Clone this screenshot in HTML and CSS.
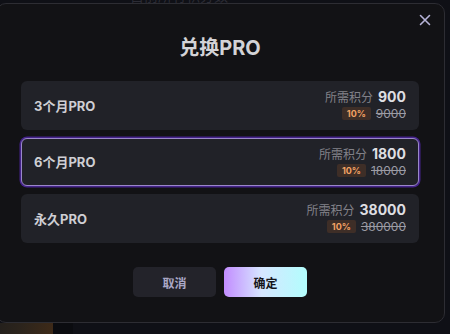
FILE: index.html
```html
<!DOCTYPE html>
<html lang="zh">
<head>
<meta charset="utf-8">
<link rel="stylesheet" href="styles.css">
</head>
<body>
<div class="page">
  <div class="page-top"><span class="page-top-text">目前所有积分数</span></div>
  <div class="page-fill"></div>
  <div class="page-bottom">
    <div class="thumb"></div>
    <div class="thumb-dark"></div>
  </div>
</div>

<div class="modal">
  <button class="close" aria-label="关闭">
    <svg width="12" height="12" viewBox="0 0 12 12"><path d="M1.5 1.5 L10.5 10.5 M10.5 1.5 L1.5 10.5" stroke="#b6b3d8" stroke-width="1.6" stroke-linecap="round" fill="none"/></svg>
  </button>
  <h1 class="title">兑换PRO</h1>
  <div class="plans">
    <div class="plan">
      <div class="plan-name">3个月PRO</div>
      <div class="plan-price">
        <div class="price-row"><span class="price-label">所需积分</span><span class="price-value">900</span></div>
        <div class="price-row"><span class="badge">10%</span><span class="old">9000</span></div>
      </div>
    </div>
    <div class="plan selected">
      <div class="plan-name">6个月PRO</div>
      <div class="plan-price">
        <div class="price-row"><span class="price-label">所需积分</span><span class="price-value">1800</span></div>
        <div class="price-row"><span class="badge">10%</span><span class="old">18000</span></div>
      </div>
    </div>
    <div class="plan">
      <div class="plan-name">永久PRO</div>
      <div class="plan-price">
        <div class="price-row"><span class="price-label">所需积分</span><span class="price-value">38000</span></div>
        <div class="price-row"><span class="badge">10%</span><span class="old">380000</span></div>
      </div>
    </div>
  </div>
  <div class="actions">
    <button class="btn btn-cancel">取消</button>
    <button class="btn btn-ok">确定</button>
  </div>
</div>
</body>
</html>
```

FILE: styles.css
```css
* { box-sizing: border-box; }
html, body {
  margin: 0;
  padding: 0;
  width: 450px;
  height: 334px;
  overflow: hidden;
  background: #0f1016;
  font-family: Inter, "Noto Sans CJK SC", sans-serif;
}
.page {
  width: 450px;
  height: 334px;
  display: flex;
  flex-direction: column;
}
.page-top {
  height: 3px;
  overflow: hidden;
  position: relative;
}
.page-top-text {
  display: block;
  margin-top: -11px;
  margin-left: 130px;
  font-size: 14px;
  line-height: 14px;
  color: #2c2c35;
}
.page-fill { flex: 1; }
.page-bottom {
  height: 11px;
  display: flex;
}
.thumb {
  width: 53px;
  background: linear-gradient(100deg, #24201c 0%, #2c241c 40%, #3e2a18 100%);
}
.thumb-dark {
  width: 20px;
  background: #0b0c10;
}

.modal {
  position: fixed;
  left: -4px;
  top: 3px;
  width: 449px;
  height: 320px;
  background: #121215;
  border: 1px solid #2d2d33;
  border-radius: 10px;
  padding: 30px 25px 0 24px;
}
.close {
  position: absolute;
  top: 10px;
  right: 13px;
  width: 12px;
  height: 12px;
  padding: 0;
  border: 0;
  background: transparent;
  display: flex;
}
.title {
  margin: 0 0 19px;
  text-align: center;
  font-size: 20px;
  line-height: 28px;
  font-weight: 700;
  color: #d3d3d7;
}
.plans {
  display: flex;
  flex-direction: column;
  gap: 8px;
}
.plan {
  height: 48.5px;
  background: #212228;
  border: 1px solid transparent;
  border-radius: 6px;
  padding: 0 12px;
  display: flex;
  align-items: center;
  justify-content: space-between;
}
.plan.selected {
  border-color: #9a87c9;
  box-shadow: 0 0 0 1.5px #44228a;
}
.plan-name {
  font-size: 13px;
  font-weight: 700;
  color: #cfcfd4;
}
.plan-price {
  display: flex;
  flex-direction: column;
  align-items: flex-end;
}
.price-row {
  display: flex;
  align-items: center;
  height: 17px;
}
.price-label {
  font-size: 12px;
  color: #818188;
  margin-right: 5px;
}
.price-value {
  font-size: 14px;
  font-weight: 700;
  color: #dedee2;
}
.badge {
  height: 13px;
  padding: 0 5px;
  border-radius: 2px;
  background: #3e2e27;
  color: #f2a264;
  font-size: 9px;
  font-weight: 700;
  line-height: 13px;
  margin-right: 5px;
}
.old {
  font-size: 12px;
  color: #9b9ba4;
  text-decoration: line-through;
}
.actions {
  margin-top: 24.5px;
  display: flex;
  justify-content: center;
  gap: 8px;
}
.btn {
  width: 83px;
  height: 30px;
  border: 0;
  border-radius: 5px;
  font-family: Inter, "Noto Sans CJK SC", sans-serif;
  font-size: 12px;
  font-weight: 700;
  padding: 0;
}
.btn-cancel {
  background: #23232a;
  color: #aaa7c5;
}
.btn-ok {
  background: linear-gradient(90deg, #c28cff 0%, #d6e6ff 45%, #b2fdfd 100%);
  color: #15151a;
}
```
